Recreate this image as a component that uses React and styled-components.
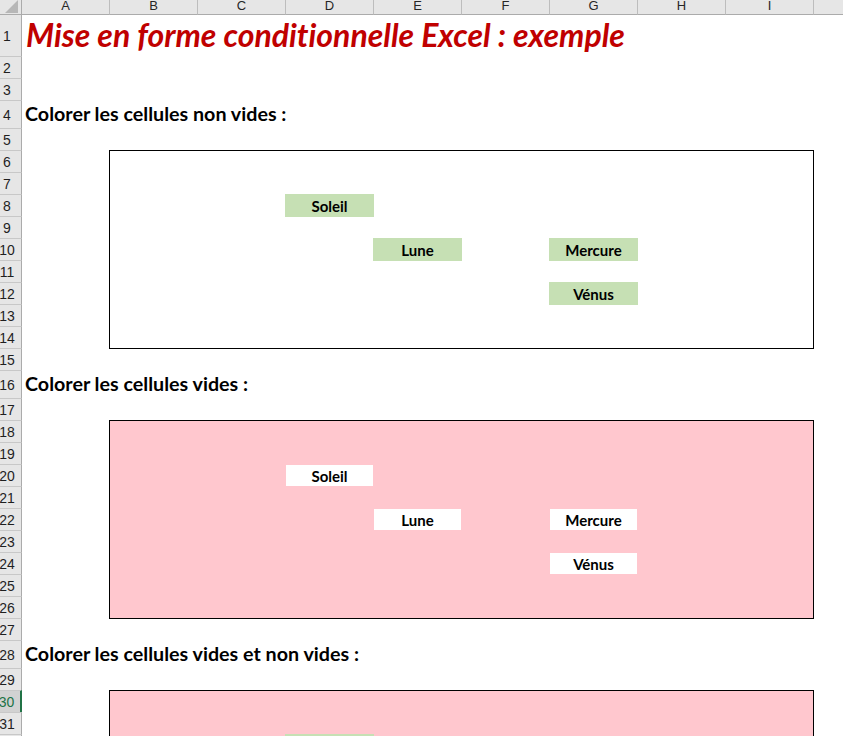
import React from "react";
import styled, { createGlobalStyle } from "styled-components";

const GlobalStyle = createGlobalStyle`
  html, body {
    margin: 0;
    padding: 0;
    background: #ffffff;
    overflow: hidden;
  }
  body {
    font-family: Lato, "Noto Sans", sans-serif;
    font-variant-ligatures: none;
  }
`;

const COLS = ["A", "B", "C", "D", "E", "F", "G", "H", "I", "J"];
const TALL = { 1: 41, 4: 28, 16: 28, 28: 28 };
const ROW_COUNT = 40;
const SELECTED_ROW = 30;
const rowHeights = Array.from({ length: ROW_COUNT }, (_, i) => TALL[i + 1] || 22);
const rowTemplate = rowHeights.map((h) => `${h}px`).join(" ");

const planets = [
  { name: "Soleil", col: 3, row: 3 },
  { name: "Lune", col: 4, row: 5 },
  { name: "Mercure", col: 6, row: 5 },
  { name: "Vénus", col: 6, row: 7 },
];

const sections = [
  { title: "Colorer les cellules non vides :", row: 4, box: "white", cell: "green" },
  { title: "Colorer les cellules vides :", row: 16, box: "pink", cell: "white" },
  { title: "Colorer les cellules vides et non vides :", row: 28, box: "pink", cell: "green" },
];

const fills = {
  white: "#ffffff",
  pink: "#ffc7ce",
  green: "#c6e0b4",
};

// sheet grid: line 1 is the column header, row n starts on line n + 1
const Sheet = styled.div`
  display: grid;
  grid-template-columns: 22px 87px repeat(9, 88px);
  grid-template-rows: 15px ${rowTemplate};
  width: 843px;
  height: 736px;
  overflow: hidden;
`;

const Corner = styled.div`
  grid-column: 1;
  grid-row: 1;
  display: flex;
  justify-content: flex-end;
  align-items: flex-end;
  padding: 0 3px 1px 0;
  background: #e6e6e6;
  border-right: 1px solid #ababab;
  border-bottom: 1px solid #ababab;
`;

const Triangle = styled.div`
  width: 13px;
  height: 13px;
  background: #b7b7b7;
  clip-path: polygon(100% 0, 100% 100%, 0 100%);
`;

const ColHead = styled.div`
  grid-row: 1;
  grid-column: ${({ $col }) => $col};
  display: flex;
  justify-content: center;
  background: #e6e6e6;
  border-bottom: 1px solid #ababab;
  border-left: ${({ $first }) => ($first ? "none" : "1px solid #bdbdbd")};
  font-family: "Liberation Sans", Arial, sans-serif;
  font-size: 13px;
  line-height: 11px;
  color: #262626;
  overflow: hidden;
`;

const RowHead = styled.div`
  grid-column: 1;
  grid-row: ${({ $row }) => $row};
  display: flex;
  align-items: center;
  justify-content: center;
  padding-right: 7px;
  background: ${({ $selected }) => ($selected ? "#d2d2d2" : "#e6e6e6")};
  border-top: ${({ $first }) => ($first ? "none" : "1px solid #c8c8c8")};
  border-right: ${({ $selected }) => ($selected ? "2px solid #217346" : "1px solid #ababab")};
  font-family: "Liberation Sans", Arial, sans-serif;
  font-size: 14px;
  color: ${({ $selected }) => ($selected ? "#217346" : "#1f1f1f")};
  white-space: nowrap;
`;

const Title = styled.h1`
  grid-column: 2 / -1;
  grid-row: 2;
  align-self: end;
  margin: 0 0 3px;
  padding-left: 4px;
  font-size: 32px;
  font-style: italic;
  font-weight: 700;
  line-height: 36px;
  color: #c00000;
  white-space: nowrap;
`;

const Heading = styled.h2`
  grid-column: 2 / -1;
  grid-row: ${({ $row }) => $row};
  align-self: end;
  margin: 0 0 3px;
  padding-left: 3px;
  font-size: 19.7px;
  font-weight: 700;
  line-height: 22px;
  color: #000000;
  white-space: nowrap;
`;

const Panel = styled.section`
  grid-column: 3 / 11;
  grid-row: ${({ $from }) => `${$from} / ${$from + 9}`};
  display: grid;
  grid-template-columns: repeat(8, 88px);
  grid-template-rows: repeat(9, 22px);
  margin: 0 -1px -1px 0;
  border: 1px solid #000000;
  background: ${({ $fill }) => fills[$fill]};
`;

const Cell = styled.div`
  grid-column: ${({ $col }) => $col};
  grid-row: ${({ $row }) => $row};
  display: flex;
  align-items: center;
  justify-content: center;
  margin: ${({ $fill }) => ($fill === "green" ? "-1px 0 0 -1px" : "0 1px 1px 0")};
  background: ${({ $fill }) => fills[$fill]};
  font-size: 15px;
  font-weight: 700;
  color: #000000;
`;

const App = () => {
  return (
    <>
      <GlobalStyle />
      <Sheet>
        <Corner>
          <Triangle />
        </Corner>
        {COLS.map((c, i) => (
          <ColHead key={c} $first={i === 0} $col={i + 2}>
            {c}
          </ColHead>
        ))}
        {rowHeights.map((_, i) => (
          <RowHead
            key={i}
            $first={i === 0}
            $selected={i + 1 === SELECTED_ROW}
            $row={i + 2}
          >
            {i + 1}
          </RowHead>
        ))}

        <Title>Mise en forme conditionnelle Excel : exemple</Title>

        {sections.map((s) => (
          <React.Fragment key={s.row}>
            <Heading $row={s.row + 1}>{s.title}</Heading>
            <Panel $fill={s.box} $from={s.row + 3}>
              {planets.map((p) => (
                <Cell key={p.name} $fill={s.cell} $col={p.col} $row={p.row}>
                  {p.name}
                </Cell>
              ))}
            </Panel>
          </React.Fragment>
        ))}
      </Sheet>
    </>
  );
};

export default App;
